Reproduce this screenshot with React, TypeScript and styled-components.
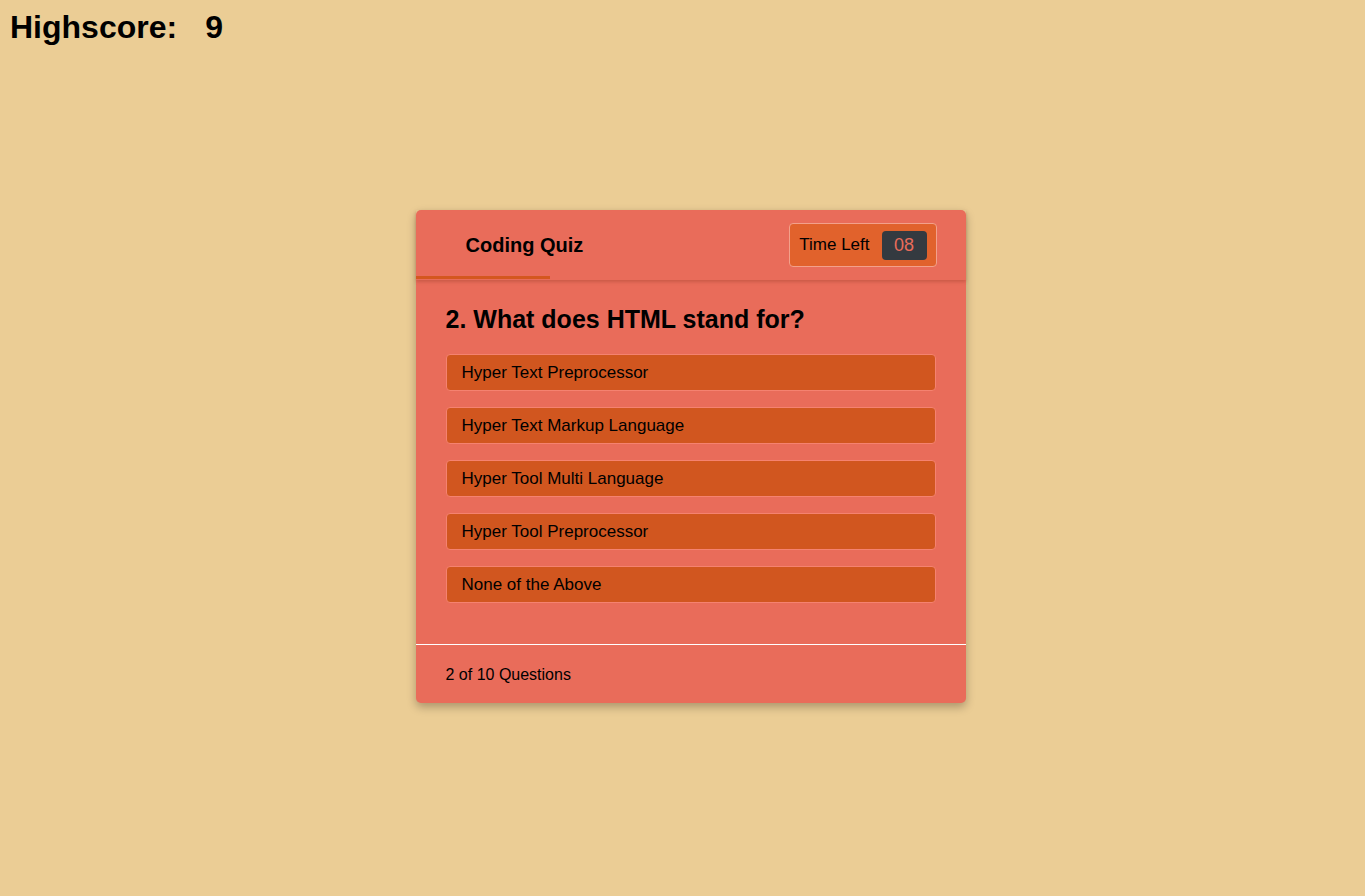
import React from 'react';
import styled, { createGlobalStyle } from 'styled-components';

const GlobalStyle = createGlobalStyle`
  body {
    margin: 0;
    background: #ebcd95;
    font-family: "Liberation Sans", Arial, sans-serif;
    color: #000;
  }
`;

const Page = styled.div`
  min-height: 896px;
  display: flex;
  flex-direction: column;
  padding-left: 16px;
`;

const Highscore = styled.h1`
  margin: 0 0 0 -16px;
  padding: 9px 10px 0;
  font-size: 32px;
  font-weight: bold;
  line-height: 37px;
  display: flex;
  gap: 28px;
`;

const Card = styled.div`
  width: 550px;
  margin: 164px auto 0;
  background: #e96c5a;
  border-radius: 5px;
  box-shadow: 0 4px 10px rgba(0, 0, 0, 0.28);
`;

const Header = styled.div`
  height: 70px;
  display: flex;
  align-items: center;
  justify-content: space-between;
  padding-right: 29px;
  box-shadow: 0 2px 3px rgba(150, 60, 40, 0.35);
  position: relative;
`;

const Tab = styled.div`
  align-self: stretch;
  display: flex;
  align-items: center;
  padding-left: 50px;
  font-size: 20px;
  font-weight: bold;
  position: relative;
  &::after {
    content: '';
    position: absolute;
    left: 0;
    bottom: 1px;
    width: 134px;
    height: 3px;
    background: #d4571f;
  }
`;

const Timer = styled.div`
  display: flex;
  align-items: center;
  gap: 12px;
  height: 42px;
  padding: 0 9px;
  border: 1px solid #f3a08a;
  border-radius: 4px;
  background: #e1622c;
  font-size: 17px;
`;

const Badge = styled.span`
  width: 45px;
  height: 29px;
  border-radius: 4px;
  background: #343a40;
  color: #e96c5a;
  font-size: 18px;
  display: flex;
  align-items: center;
  justify-content: center;
`;

const Body = styled.div`
  padding: 25px 30px 41px;
  border-bottom: 1px solid #fff;
`;

const Question = styled.h2`
  margin: 0 0 21px;
  font-size: 25px;
  line-height: 28px;
  font-weight: bold;
`;

const Options = styled.div`
  display: flex;
  flex-direction: column;
  gap: 16px;
`;

const Option = styled.div`
  height: 35px;
  line-height: 35px;
  padding: 0 15px;
  background: #d1561f;
  border: 1px solid #f58270;
  border-radius: 4px;
  font-size: 17px;
`;

const Footer = styled.div`
  height: 58px;
  padding: 2px 30px 0;
  box-sizing: border-box;
  display: flex;
  align-items: center;
  font-size: 16px;
`;

const options = [
  'Hyper Text Preprocessor',
  'Hyper Text Markup Language',
  'Hyper Tool Multi Language',
  'Hyper Tool Preprocessor',
  'None of the Above',
];

export default function App() {
  return (
    <Page>
      <GlobalStyle />
      <Highscore>
        <span>Highscore:</span>
        <span>9</span>
      </Highscore>
      <Card>
        <Header>
          <Tab>Coding Quiz</Tab>
          <Timer>
            Time Left
            <Badge>08</Badge>
          </Timer>
        </Header>
        <Body>
          <Question>2. What does HTML stand for?</Question>
          <Options>
            {options.map(o => (
              <Option key={o}>{o}</Option>
            ))}
          </Options>
        </Body>
        <Footer>2 of 10 Questions</Footer>
      </Card>
    </Page>
  );
}
